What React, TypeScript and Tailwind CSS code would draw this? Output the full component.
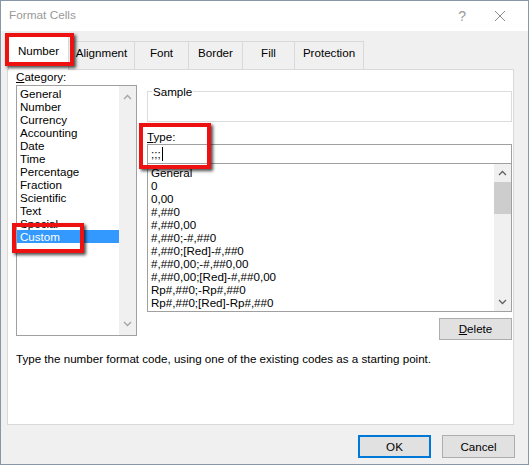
import React from "react";

const font = { fontFamily: '"Liberation Sans", Arial, sans-serif' };

function Chevron({ up, color }: { up: boolean; color: string }) {
  return (
    <svg width="9" height="6" viewBox="0 0 9 6">
      <polyline
        points={up ? "1,5 4.5,1.5 8,5" : "1,1 4.5,4.5 8,1"}
        fill="none"
        stroke={color}
        strokeWidth="1.3"
      />
    </svg>
  );
}

const categories = [
  "General",
  "Number",
  "Currency",
  "Accounting",
  "Date",
  "Time",
  "Percentage",
  "Fraction",
  "Scientific",
  "Text",
  "Special",
  "Custom",
];

const formats = [
  "General",
  "0",
  "0,00",
  "#,##0",
  "#,##0,00",
  "#,##0;-#,##0",
  "#,##0;[Red]-#,##0",
  "#,##0,00;-#,##0,00",
  "#,##0,00;[Red]-#,##0,00",
  "Rp#,##0;-Rp#,##0",
  "Rp#,##0;[Red]-Rp#,##0",
];

export default function App() {
  return (
    <div
      className="relative w-[529px] h-[465px] bg-[#f0f0f0] border border-[#8796a8] flex flex-col text-[11.6px] text-black overflow-hidden"
      style={font}
    >
      {/* Title bar */}
      <div className="h-[30px] bg-white flex items-center pl-[8px] pr-[22px] shrink-0">
        <span className="text-[#999999] text-[11.8px]">Format Cells</span>
        <span className="ml-auto text-[#9a9a9a] text-[14px] mr-[28px]">?</span>
        <svg width="12" height="12" viewBox="0 0 12 12">
          <path d="M1 1 L11 11 M11 1 L1 11" stroke="#8a8a8a" strokeWidth="1" />
        </svg>
      </div>

      {/* Tabs */}
      <div className="flex items-end h-[38px] pl-[7px] shrink-0 relative z-10">
        <div className="w-[61px] h-[37px] bg-white border border-b-0 border-[#d9d9d9] flex justify-center pt-[8px] mb-[-1px]">
          Number
        </div>
        {[
          ["Alignment", 66],
          ["Font", 54],
          ["Border", 54],
          ["Fill", 52],
          ["Protection", 69],
        ].map(([t, w]) => (
          <div
            key={t as string}
            className="h-[28px] border-t border-r border-[#d9d9d9] flex justify-center pt-[2px]"
            style={{ width: w as number }}
          >
            {t}
          </div>
        ))}
      </div>

      {/* Panel */}
      <div className="ml-[6px] w-[507px] h-[356px] bg-white border border-[#d9d9d9] flex flex-col pl-[8px] shrink-0">
        <div className="flex">
          {/* Left column */}
          <div className="w-[121px] flex flex-col">
            <div className="h-[15px] leading-[14px]">
              <span className="underline">C</span>ategory:
            </div>
            <div className="h-[251px] border border-[#a0a0a0] flex">
              <div className="flex-1 flex flex-col pt-[1px] leading-[13px]">
                {categories.map((c) => (
                  <div
                    key={c}
                    className={
                      "h-[13px] pl-[3px] " +
                      (c === "Custom" ? "bg-[#3399ff] text-white" : "")
                    }
                  >
                    {c}
                  </div>
                ))}
              </div>
              <div className="w-[17px] bg-[#f0f0f0] flex flex-col items-center justify-between py-[8px]">
                <Chevron up color="#a3a3a3" />
                <Chevron up={false} color="#a3a3a3" />
              </div>
            </div>
          </div>

          {/* Right column */}
          <div className="ml-[10px] w-[365px] flex flex-col">
            <div className="mt-[21px] h-[31px] border border-[#dcdcdc] relative">
              <span className="absolute -top-[7px] left-[4px] bg-white px-[1px] leading-[13px]">
                Sample
              </span>
            </div>
            <div className="mt-[8px] h-[13px] leading-[13px]">
              <span className="underline">T</span>ype:
            </div>
            <div className="mt-[1px] h-[20px] border border-[#a0a0a0] flex items-center pl-[3px]">
              <span>;;;</span>
              <span className="w-px h-[14px] bg-black ml-[1px]" />
            </div>
            <div className="h-[148px] border border-t-0 border-[#a0a0a0] flex">
              <div className="flex-1 flex flex-col pt-[2px] leading-[13px] pl-[3px]">
                {formats.map((f) => (
                  <div key={f} className="h-[13px] whitespace-nowrap">
                    {f}
                  </div>
                ))}
              </div>
              <div className="w-[17px] bg-[#f0f0f0] flex flex-col items-center">
                <div className="h-[18px] flex items-center">
                  <Chevron up color="#606060" />
                </div>
                <div className="w-[17px] h-[32px] bg-[#cdcdcd]" />
                <div className="mt-auto h-[18px] flex items-center">
                  <Chevron up={false} color="#606060" />
                </div>
              </div>
            </div>
            <div className="flex justify-end mt-[6px]">
              <div className="w-[73px] h-[22px] bg-[#e1e1e1] border border-[#adadad] flex items-center justify-center">
                <span>
                  <span className="underline">D</span>elete
                </span>
              </div>
            </div>
          </div>
        </div>
        <div className="mt-[12px] leading-[14px] whitespace-nowrap">
          Type the number format code, using one of the existing codes as a starting point.
        </div>
      </div>

      {/* Bottom buttons */}
      <div className="flex justify-end gap-[11px] pr-[13px] mt-[10px]">
        <div className="w-[73px] h-[23px] bg-[#e1e1e1] border-2 border-[#0078d7] flex items-center justify-center">
          OK
        </div>
        <div className="w-[73px] h-[23px] bg-[#e1e1e1] border border-[#adadad] flex items-center justify-center">
          Cancel
        </div>
      </div>

      {/* Red highlight overlays */}
      <div className="absolute left-[4px] top-[32px] w-[69px] h-[33px] border-[4px] border-[#ee1111] shadow-[2px_2px_3px_rgba(0,0,0,0.7)] z-20" />
      <div className="absolute left-[138px] top-[122px] w-[72px] h-[46px] border-[4px] border-[#ee1111] shadow-[2px_2px_3px_rgba(0,0,0,0.7)] z-20" />
      <div className="absolute left-[11px] top-[222px] w-[72px] h-[30px] border-[4px] border-[#ee1111] shadow-[2px_2px_3px_rgba(0,0,0,0.7)] z-20" />
    </div>
  );
}
